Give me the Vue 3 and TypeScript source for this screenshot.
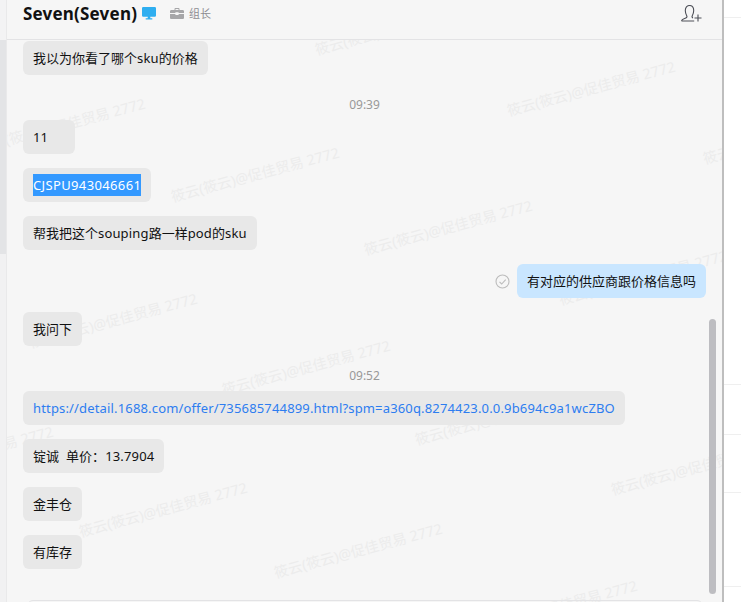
<script setup lang="ts">
interface Msg { kind: 'left' | 'right' | 'time' | 'link' | 'sel'; text: string }
const msgs: Msg[] = [
  { kind: 'left', text: '我以为你看了哪个sku的价格' },
  { kind: 'time', text: '09:39' },
  { kind: 'left', text: '11' },
  { kind: 'sel', text: 'CJSPU943046661' },
  { kind: 'left', text: '帮我把这个souping路一样pod的sku' },
  { kind: 'right', text: '有对应的供应商跟价格信息吗' },
  { kind: 'left', text: '我问下' },
  { kind: 'time', text: '09:52' },
  { kind: 'link', text: 'https://detail.1688.com/offer/735685744899.html?spm=a360q.8274423.0.0.9b694c9a1wcZBO' },
  { kind: 'left', text: '锭诚  单价：13.7904' },
  { kind: 'left', text: '金丰仓' },
  { kind: 'left', text: '有库存' },
]
const marks: [number, number][] = [
  [311, 0], [503, 61], [699, 109],
  [-27, 98], [167, 147], [360, 200], [555, 250],
  [25, 293], [218, 340], [411, 390], [607, 440],
  [-119, 426], [75, 482], [270, 523], [465, 580],
]
const isLatin = (s: string) => /^[\x00-\x7f]+$/.test(s)
const segments = (s: string) => s.split(/([\x00-\x7f]+)/).filter(Boolean)
</script>

<template>
  <div class="page">
    <div class="rail">
      <div class="rail-top"></div>
      <div class="rail-mid"></div>
      <div class="rail-low"></div>
    </div>
    <main class="panel">
      <header class="head">
        <h1 class="name">Seven(Seven)</h1>
        <svg class="monitor" viewBox="0 0 14 13" width="14" height="13">
          <path d="M1.2 0h11.6A1.2 1.2 0 0 1 14 1.2v7.4a1.2 1.2 0 0 1-1.2 1.2H8.3v1.4h2v1.3H3.700v-1.300h2V9.800H1.200A1.200 1.200 0 0 1 0 8.600V1.200A1.200 1.200 0 0 1 1.200 0z" fill="#2eaef0" />
        </svg>
        <svg class="case" viewBox="0 0 14 11" width="14" height="11">
          <path d="M4.500 2V.9C4.500.4 4.900 0 5.400 0h3.200c.5 0 .9.400.9.900V2h3.200c.7 0 1.300.6 1.300 1.300V5H8.600v-.7H5.400V5H0V3.300C0 2.600.6 2 1.300 2h3.200zm1 0h3V1h-3v1zM0 6h5.400v1h3.200V6H14v3.700c0 .7-.6 1.300-1.300 1.300H1.300C.6 11 0 10.400 0 9.700V6z" fill="#a6a6a8" />
        </svg>
        <span class="role">组长</span>
        <svg class="adduser" viewBox="0 0 21 17" width="21" height="17">
          <path d="M.5 15.800c0-1.700 2.700-2.100 4.300-2.800 1.200-.5 1.400-1.300.9-2.300C4.800 9.200 4.300 7.500 4.300 5.600 4.300 2.600 6 .5 8.500.5s4.200 2.100 4.200 5.100c0 1.900-.5 3.600-1.400 5.100-.5 1-.3 1.800.7 2.200M.5 16h12.700" fill="none" stroke="#4e5058" stroke-width="1.100" />
          <path d="M17 9.500v7M13.500 13h7" fill="none" stroke="#4e5058" stroke-width="1.100" />
        </svg>
      </header>

      <section class="chat">
        <div class="marks">
          <span v-for="(m, i) in marks" :key="i" class="mark" :style="{ left: m[0] + 'px', top: m[1] + 'px' }">筱云(筱云)@促佳贸易 2772</span>
        </div>
        <div class="list">
          <template v-for="(m, i) in msgs" :key="i">
            <div v-if="m.kind === 'time'" class="time">{{ m.text }}</div>
            <div v-else-if="m.kind === 'right'" class="row end">
              <svg class="check" viewBox="0 0 15 15" width="15" height="15">
                <circle cx="7.500" cy="7.500" r="6.500" fill="none" stroke="#bcbcbc" stroke-width="1.100" />
                <path d="M4.500 7.800l2.200 2.200 4-4.300" fill="none" stroke="#bcbcbc" stroke-width="1.100" />
              </svg>
              <div class="bubble mine">{{ m.text }}</div>
            </div>
            <div v-else class="row">
              <div class="bubble" :class="{ link: m.kind === 'link' }">
                <span v-if="m.kind === 'sel'" class="sel">{{ m.text }}</span>
                <template v-else>
                  <span v-for="(s, j) in segments(m.text)" :key="j" :class="{ lat: isLatin(s) }">{{ s }}</span>
                </template>
              </div>
            </div>
          </template>
        </div>
        <div class="thumb"></div>
        <div class="input"></div>
      </section>
    </main>
    <aside class="side">
      <div class="line l1"></div>
      <div class="line l2"></div>
      <div class="line l3"></div>
      <div class="line l4"></div>
      <div class="line l5"></div>
    </aside>
  </div>
</template>

<style scoped>
.page {
  display: flex;
  width: 741px;
  height: 602px;
  overflow: hidden;
  background: #fff;
  font-family: "Noto Sans", "Noto Sans CJK SC", sans-serif;
}
.rail {
  width: 6px;
  flex: none;
  display: flex;
  flex-direction: column;
  border-right: 1px solid #e9e9ea;
}
.rail-top { height: 40px; background: #f3f3f4; }
.rail-mid { height: 214px; background: #e3e4e6; }
.rail-low { flex: 1; background: #f1f1f2; }
.panel {
  flex: 1;
  min-width: 0;
  display: flex;
  flex-direction: column;
  background: #f6f6f6;
  border-right: 2px solid #bebebe;
}
.head {
  height: 39px;
  flex: none;
  display: flex;
  align-items: flex-start;
  padding: 0 20px 0 16px;
  border-bottom: 1px solid #e3e3e5;
}
.name {
  margin: 2px 0 0;
  font-size: 17px;
  line-height: 24px;
  font-weight: 700;
  letter-spacing: .2px;
  color: #111;
}
.monitor { margin: 7px 0 0 5px; }
.case { margin: 8px 0 0 14px; }
.role {
  margin: 6px 0 0 5px;
  font-size: 11px;
  line-height: 16px;
  color: #8d8d92;
}
.adduser { margin: 5px 0 0 auto; }
.chat {
  position: relative;
  flex: 1;
  min-height: 0;
  overflow: hidden;
}
.marks {
  position: absolute;
  inset: 0;
}
.mark {
  position: absolute;
  white-space: nowrap;
  font-size: 14.4px;
  line-height: 20px;
  color: #ececec;
  transform: rotate(-15deg);
  transform-origin: left bottom;
}
.list {
  position: relative;
  display: flex;
  flex-direction: column;
  padding: 1px 16px 0;
}
.row {
  display: flex;
  align-items: center;
  margin-bottom: 14px;
}
.end { justify-content: flex-end; }
.check { margin-right: 7px; }
.bubble {
  min-width: 32px;
  padding: 8px 10px;
  border-radius: 6px;
  background: #e8e8e8;
  color: #111;
  font-size: 13px;
  line-height: 18px;
  white-space: pre;
}
.lat { letter-spacing: .16px; }
.mine { background: #c9e6ff; }
.link { color: #2d7df0; }
.sel {
  display: inline-block;
  background: #3399ff;
  color: #fff;
  line-height: 22px;
  margin: -2px 0;
  letter-spacing: .36px;
}
.time {
  height: 16px;
  margin: 8px 0 7px;
  text-align: center;
  font-size: 12px;
  line-height: 16px;
  color: #999;
}
.thumb {
  position: absolute;
  left: 702px;
  top: 279px;
  width: 7px;
  height: 275px;
  border-radius: 4px;
  background: #bdbdc1;
}
.input {
  position: absolute;
  left: 20px;
  right: 19px;
  top: 560px;
  height: 12px;
  border: 1px solid #e3e3e5;
  border-radius: 6px 6px 0 0;
}
.side {
  position: relative;
  flex: none;
  width: 17px;
  background: #fff;
}
.line {
  position: absolute;
  left: 0;
  right: 0;
  height: 1px;
  background: #efefef;
}
.l1 { top: 17px; }
.l2 { top: 384px; }
.l3 { top: 434px; }
.l4 { top: 492px; }
.l5 { top: 586px; }
</style>
